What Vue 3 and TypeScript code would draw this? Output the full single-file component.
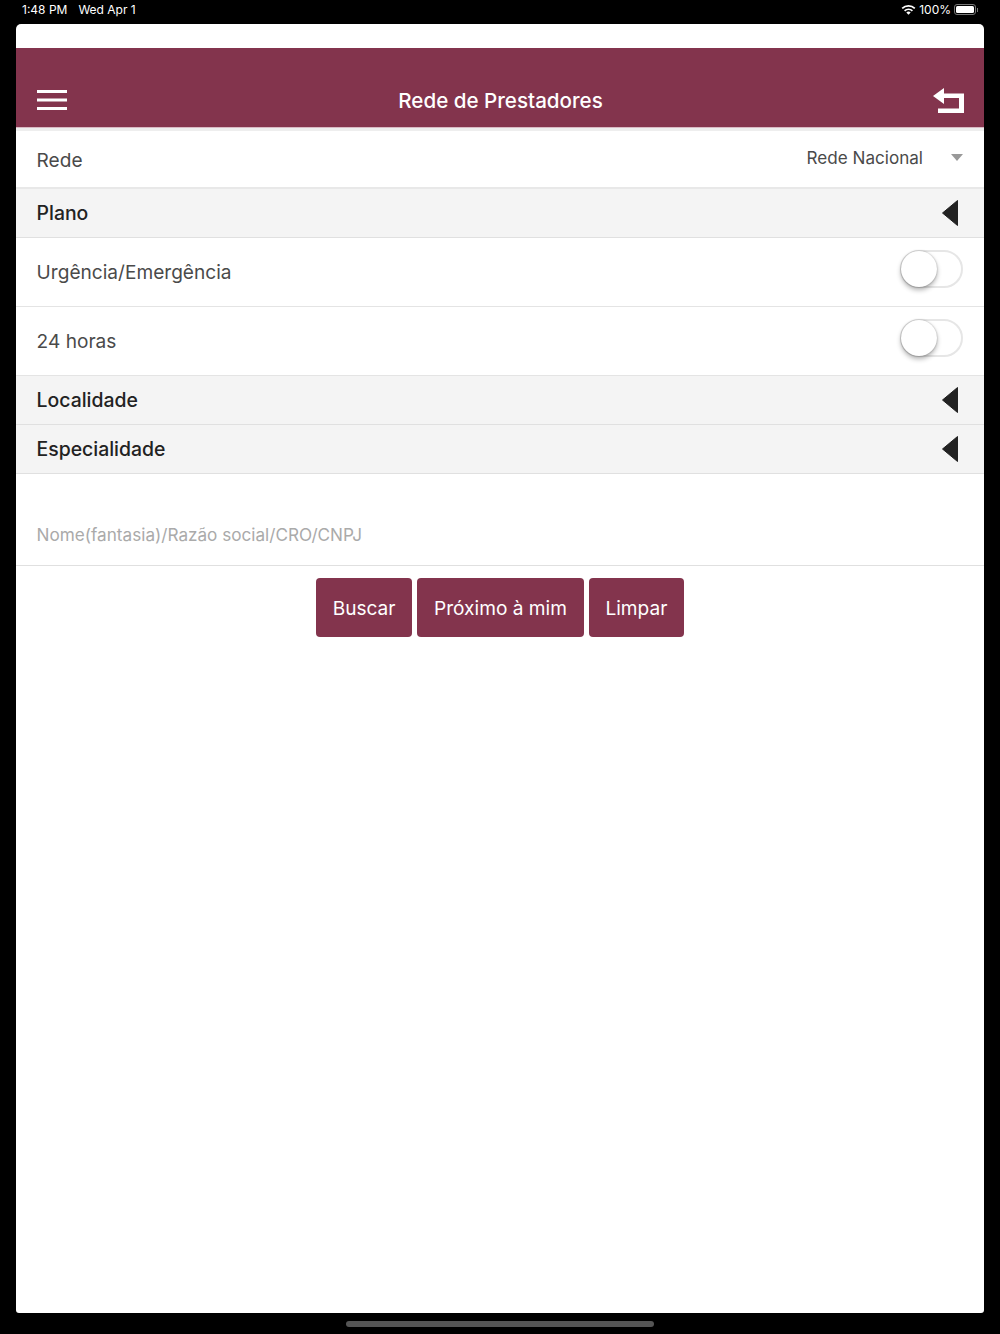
<template>
  <div class="screen">
    <div class="status-bar">
      <div class="status-left">
        <span>1:48 PM</span>
        <span>Wed Apr 1</span>
      </div>
      <div class="status-right">
        <svg class="wifi" width="15" height="11" viewBox="0 0 15 11">
          <path d="M0.6 3.7A10 10 0 0 1 14.4 3.7L13.2 5A8.2 8.2 0 0 0 1.8 5Z" fill="#fff" />
          <path d="M3 6.2A6.6 6.6 0 0 1 12 6.2L10.8 7.4A5 5 0 0 0 4.2 7.4Z" fill="#fff" />
          <path d="M5.3 8.5A3.3 3.3 0 0 1 9.7 8.5L7.5 10.8Z" fill="#fff" />
        </svg>
        <span>100%</span>
        <div class="battery"><div class="battery-fill"></div></div>
        <div class="battery-tip"></div>
      </div>
    </div>

    <div class="card">
      <div class="top-gap"></div>
      <header class="app-header">
        <svg width="31" height="21" viewBox="0 0 31 21" class="menu-icon">
          <rect x="0" y="0" width="30" height="3" fill="#fff" />
          <rect x="0" y="8.5" width="30" height="3" fill="#fff" />
          <rect x="0" y="17" width="30" height="3" fill="#fff" />
        </svg>
        <h1>Rede de Prestadores</h1>
        <svg width="31" height="25" viewBox="0 0 31 25" class="back-icon">
          <path d="M0 8L11 0V5.5H31V25H5V20.5H26V10H11V16Z" fill="#fff" />
        </svg>
      </header>

      <div class="row select-row">
        <span class="label">Rede</span>
        <div class="select-value">
          <span>Rede Nacional</span>
          <i class="caret"></i>
        </div>
      </div>

      <template v-for="row in rows" :key="row.label">
        <div v-if="row.kind === 'group'" class="group-row">
          <span>{{ row.label }}</span>
          <svg width="16" height="26" viewBox="0 0 16 26">
            <path d="M15.5 0.5V25.5L0.5 13Z" fill="#222" stroke="#222" stroke-linejoin="round" />
          </svg>
        </div>
        <div v-else class="row toggle-row">
          <span class="label">{{ row.label }}</span>
          <div class="toggle"><div class="knob"></div></div>
        </div>
      </template>

      <div class="search-row">
        <span>Nome(fantasia)/Razão social/CRO/CNPJ</span>
      </div>

      <div class="actions">
        <button v-for="label in buttons" :key="label">{{ label }}</button>
      </div>
    </div>

    <div class="home-indicator"></div>
  </div>
</template>

<script setup lang="ts">
interface Row {
  label: string;
  kind: "group" | "toggle";
}

const rows: Row[] = [
  { label: "Plano", kind: "group" },
  { label: "Urgência/Emergência", kind: "toggle" },
  { label: "24 horas", kind: "toggle" },
  { label: "Localidade", kind: "group" },
  { label: "Especialidade", kind: "group" },
];

const buttons = ["Buscar", "Próximo à mim", "Limpar"];
</script>

<style>
html,
body {
  margin: 0;
  background: #000;
}
</style>

<style scoped>
.screen {
  width: 1000px;
  height: 1334px;
  background: #000;
  display: flex;
  flex-direction: column;
  align-items: center;
  overflow: hidden;
  font-family: Inter, "Liberation Sans", sans-serif;
}

.status-bar {
  width: 100%;
  height: 24px;
  box-sizing: border-box;
  padding: 0 22px 5px;
  display: flex;
  justify-content: space-between;
  align-items: center;
  color: #fff;
  font-size: 12px;
}

.status-left {
  display: flex;
  gap: 11px;
}

.status-right {
  display: flex;
  align-items: center;
}

.wifi {
  margin-right: 3px;
}

.battery {
  width: 22px;
  height: 11px;
  margin-left: 3px;
  padding: 1px;
  box-sizing: border-box;
  border: 1px solid #777;
  border-radius: 3px;
}

.battery-fill {
  height: 100%;
  background: #fff;
  border-radius: 1.5px;
}

.battery-tip {
  width: 1px;
  height: 4px;
  margin-left: 1px;
  background: #777;
}

.card {
  width: 968px;
  height: 1289px;
  background: #fff;
  border-radius: 5px 5px 3px 3px;
  overflow: hidden;
}

.top-gap {
  height: 24px;
}

.app-header {
  height: 80px;
  box-sizing: border-box;
  background: #83344d;
  border-bottom: 1px solid #d9b9c3;
  padding: 42px 20px 0 21px;
  display: flex;
  justify-content: space-between;
  align-items: flex-start;
  color: #fff;
}

.app-header h1 {
  margin: -1px 0 0;
  font-size: 20.6px;
  font-weight: 500;
  line-height: 24px;
}

.back-icon {
  margin-top: -2px;
}

.row {
  display: flex;
  justify-content: space-between;
  align-items: center;
  padding: 0 21px 0 20.6px;
  box-sizing: border-box;
  background: #fff;
  border-bottom: 1px solid #e4e4e4;
  color: #4a4a4a;
}

.label {
  font-size: 19.1px;
}

.select-row {
  height: 61px;
  padding-top: 1px;
  border-top: 3px solid #eeeeee;
  border-bottom: 2px solid #e8e8e8;
}

.select-value {
  display: flex;
  align-items: center;
  font-size: 17.1px;
  margin-top: -5px;
}

.caret {
  width: 0;
  height: 0;
  margin-left: 28px;
  border-left: 6px solid transparent;
  border-right: 6px solid transparent;
  border-top: 7px solid #999;
}

.group-row {
  height: 49px;
  box-sizing: border-box;
  padding: 0 26px 0 20.6px;
  background: #f4f4f4;
  border-bottom: 1px solid #e0e0e0;
  display: flex;
  justify-content: space-between;
  align-items: center;
  font-size: 19.4px;
  font-weight: 500;
  color: #222;
}

.toggle-row {
  height: 69px;
}

.toggle {
  width: 63px;
  height: 38px;
  box-sizing: border-box;
  border: 2px solid #e6e6e6;
  border-radius: 19px;
  margin-top: -6px;
  position: relative;
}

.knob {
  position: absolute;
  left: -1px;
  top: -1px;
  width: 36px;
  height: 36px;
  border-radius: 50%;
  background: #fff;
  box-shadow: 0 3px 5px rgba(0, 0, 0, 0.3), 0 0 2px rgba(0, 0, 0, 0.3);
}

.search-row {
  height: 92px;
  box-sizing: border-box;
  padding: 50px 20.6px 0;
  border-bottom: 1px solid #e0e0e0;
  font-size: 17.15px;
  color: #aaa;
}

.actions {
  display: flex;
  justify-content: center;
  gap: 5px;
  padding-top: 12px;
}

.actions button {
  height: 59px;
  padding: 0 16.75px;
  border: 0;
  border-radius: 4px;
  background: #83344d;
  color: #fff;
  font-family: inherit;
  font-size: 19.1px;
}

.home-indicator {
  width: 308px;
  height: 5.5px;
  margin-top: 8px;
  border-radius: 3px;
  background: #555;
}
</style>
